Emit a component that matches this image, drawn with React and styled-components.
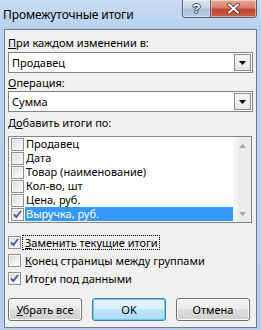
import React from "react";
import styled, { createGlobalStyle } from "styled-components";

const Global = createGlobalStyle`
  html, body { margin: 0; padding: 0; }
  body {
    width: 261px;
    height: 330px;
    overflow: hidden;
    font-family: "Noto Sans", "Liberation Sans", sans-serif;
    font-size: 11px;
    color: #000;
  }
  * { box-sizing: border-box; }
`;

const Window = styled.div`
  width: 261px;
  height: 330px;
  display: flex;
  flex-direction: column;
  background: linear-gradient(180deg, #c8dcf2 0px, #b9d1ec 30px, #b7cfea 100%);
`;

const TitleBar = styled.div`
  height: 29px;
  flex: none;
  display: flex;
  align-items: flex-start;
`;

const Caption = styled.div`
  margin: 7px 0 0 3px;
  font-size: 12px;
  line-height: 15px;
  color: #000;
  letter-spacing: -0.1px;
`;

const CaptionButtons = styled.div`
  margin-left: auto;
  margin-right: 4px;
  display: flex;
  height: 18px;
  border: 1px solid #4a5d7a;
  border-top: none;
  border-radius: 0 0 4px 4px;
  overflow: hidden;
`;

const CapBtn = styled.div`
  width: ${(p) => p.$w}px;
  height: 17px;
  display: flex;
  align-items: center;
  justify-content: center;
  background: ${(p) =>
    p.$close
      ? "linear-gradient(180deg, #e6a899 0%, #d7806c 45%, #c2432c 55%, #d0613f 100%)"
      : "linear-gradient(180deg, #dbe5f1 0%, #c4d3e6 45%, #aabed8 55%, #b8cbe2 100%)"};
  border-left: ${(p) => (p.$close ? "1px solid #5b4a52" : "none")};
  box-shadow: inset 0 0 0 1px rgba(255, 255, 255, 0.45);
`;

const HelpGlyph = styled.span`
  font-family: "Liberation Sans", sans-serif;
  font-weight: bold;
  font-size: 13px;
  line-height: 13px;
  color: #fff;
  text-shadow: 0 0 1px #2c3e5c, 1px 0 0 #2c3e5c, -1px 0 0 #2c3e5c, 0 1px 0 #2c3e5c,
    0 -1px 0 #2c3e5c;
`;

const Client = styled.div`
  flex: 1;
  margin: 0 4px 2px 4px;
  border: 1px solid #6b7c95;
  background: #f0f0f0;
  padding: 6px 3px 0 3px;
  display: flex;
  flex-direction: column;
`;

const Label = styled.div`
  height: 13px;
  line-height: 13px;
  white-space: nowrap;
  margin-top: ${(p) => p.$mt || 0}px;
`;

const U = styled.span`
  text-decoration: underline;
  text-underline-offset: 1px;
`;

const Combo = styled.div`
  margin-top: ${(p) => p.$mt || 0}px;
  height: 21px;
  border: 1px solid #7f858d;
  background: #fff;
  display: flex;
  align-items: stretch;
`;

const ComboValue = styled.div`
  flex: 1;
  padding-left: 3px;
  line-height: 19px;
`;

const ArrowBtn = styled.div`
  width: 17px;
  margin: 1px;
  border: 1px solid #8d8d8d;
  background: linear-gradient(180deg, #f6f6f6 0%, #e6e6e6 100%);
  display: flex;
  align-items: center;
  justify-content: center;
`;

const ListBox = styled.div`
  margin-top: ${(p) => p.$mt || 0}px;
  height: 87px;
  margin-right: 1px;
  border: 1px solid #7f858d;
  background: #fff;
  display: flex;
`;

const Items = styled.div`
  flex: 1;
  display: flex;
  flex-direction: column;
`;

const ItemRow = styled.div`
  height: 14px;
  display: flex;
  align-items: center;
  padding-left: 2px;
`;

const ItemText = styled.div`
  flex: 1;
  height: 14px;
  line-height: 14px;
  padding-left: 1px;
  margin-left: 1px;
  white-space: nowrap;
  background: ${(p) => (p.$sel ? "#3399ff" : "transparent")};
  color: ${(p) => (p.$sel ? "#fff" : "#000")};
`;

const ScrollBar = styled.div`
  width: 18px;
  background: linear-gradient(90deg, #f7f7f7 0%, #ececec 30%, #ececec 100%);
  border-left: 1px solid #f2f2f2;
  display: flex;
  flex-direction: column;
  justify-content: space-between;
  align-items: center;
  padding: 7px 0 6px;
`;

const Box = styled.div`
  width: 13px;
  height: 13px;
  flex: none;
  border: 1px solid #8e8f8f;
  background: linear-gradient(135deg, #d6d9dd 0%, #eef0f2 60%, #fafafa 100%);
  box-shadow: inset 0 0 0 1px #f4f4f4;
  display: flex;
  align-items: center;
  justify-content: center;
`;

const Options = styled.div`
  margin-top: 10px;
  display: flex;
  flex-direction: column;
`;

const OptionRow = styled.div`
  height: 18px;
  display: flex;
  align-items: center;
`;

const OptionText = styled.span`
  margin-left: 2px;
  padding: 0 1px 0 2px;
  line-height: 13px;
  white-space: nowrap;
  outline: ${(p) => (p.$focus ? "1px dotted #000" : "none")};
  outline-offset: 0px;
`;

const Buttons = styled.div`
  margin-top: 11px;
  margin-right: 3px;
  display: flex;
  justify-content: space-between;
`;

const Button = styled.div`
  width: 74px;
  height: 23px;
  border: 1px solid ${(p) => (p.$default ? "#3c7fb1" : "#707070")};
  border-radius: 3px;
  background: ${(p) =>
    p.$default
      ? "linear-gradient(180deg, #eaf6fd 0%, #d9f0fc 50%, #bee6fd 50%, #a7d9f5 100%)"
      : "linear-gradient(180deg, #f2f2f2 0%, #ebebeb 50%, #dddddd 50%, #cfcfcf 100%)"};
  box-shadow: ${(p) =>
    p.$default ? "inset 0 0 0 1px #6fc8f3" : "inset 0 0 0 1px #fcfcfc"};
  display: flex;
  align-items: center;
  justify-content: center;
  line-height: 13px;
`;

const Check = () => (
  <svg width="11" height="11" viewBox="0 0 11 11">
    <path d="M2 5.5 L4.3 8 L9 2" fill="none" stroke="#4c5f8f" strokeWidth="1.9" />
  </svg>
);

const DownTri = ({ color = "#000" }) => (
  <svg width="7" height="4" viewBox="0 0 7 4">
    <path d="M0 0 H7 L3.5 4 Z" fill={color} />
  </svg>
);

const UpTri = ({ color }) => (
  <svg width="7" height="4" viewBox="0 0 7 4">
    <path d="M0 4 H7 L3.5 0 Z" fill={color} />
  </svg>
);

const CloseX = () => (
  <svg width="13" height="11" viewBox="0 0 13 11">
    <path d="M2 1.5 L11 9.5 M11 1.5 L2 9.5" stroke="#4b2a22" strokeWidth="3.6" strokeLinecap="round" />
    <path d="M2 1.5 L11 9.5 M11 1.5 L2 9.5" stroke="#ffffff" strokeWidth="2" strokeLinecap="round" />
  </svg>
);

const items = [
  { t: "Продавец" },
  { t: "Дата" },
  { t: "Товар (наименование)" },
  { t: "Кол-во, шт" },
  { t: "Цена, руб." },
  { t: "Выручка, руб.", checked: true, sel: true },
];

export default function App() {
  return (
    <>
      <Global />
      <Window>
        <TitleBar>
          <Caption>Промежуточные итоги</Caption>
          <CaptionButtons>
            <CapBtn $w={27}>
              <HelpGlyph>?</HelpGlyph>
            </CapBtn>
            <CapBtn $w={46} $close>
              <CloseX />
            </CapBtn>
          </CaptionButtons>
        </TitleBar>
        <Client>
          <Label>
            <U>П</U>ри каждом изменении в:
          </Label>
          <Combo $mt={3}>
            <ComboValue>Продавец</ComboValue>
            <ArrowBtn>
              <DownTri />
            </ArrowBtn>
          </Combo>
          <Label $mt={3}>
            <U>О</U>перация:
          </Label>
          <Combo $mt={2}>
            <ComboValue>Сумма</ComboValue>
            <ArrowBtn>
              <DownTri />
            </ArrowBtn>
          </Combo>
          <Label $mt={4}>
            Д<U>о</U>бавить итоги по:
          </Label>
          <ListBox $mt={7}>
            <Items>
              {items.map((it) => (
                <ItemRow key={it.t}>
                  <Box>{it.checked && <Check />}</Box>
                  <ItemText $sel={it.sel}>{it.t}</ItemText>
                </ItemRow>
              ))}
            </Items>
            <ScrollBar>
              <UpTri color="#a7a7a7" />
              <DownTri color="#a7a7a7" />
            </ScrollBar>
          </ListBox>
          <Options>
            <OptionRow>
              <Box>
                <Check />
              </Box>
              <OptionText $focus>
                <U>З</U>аменить текущие итоги
              </OptionText>
            </OptionRow>
            <OptionRow>
              <Box />
              <OptionText>
                <U>К</U>онец страницы между группами
              </OptionText>
            </OptionRow>
            <OptionRow>
              <Box>
                <Check />
              </Box>
              <OptionText>
                Ито<U>г</U>и под данными
              </OptionText>
            </OptionRow>
          </Options>
          <Buttons>
            <Button>
              <span>
                <U>У</U>брать все
              </span>
            </Button>
            <Button $default>OK</Button>
            <Button>Отмена</Button>
          </Buttons>
        </Client>
      </Window>
    </>
  );
}
